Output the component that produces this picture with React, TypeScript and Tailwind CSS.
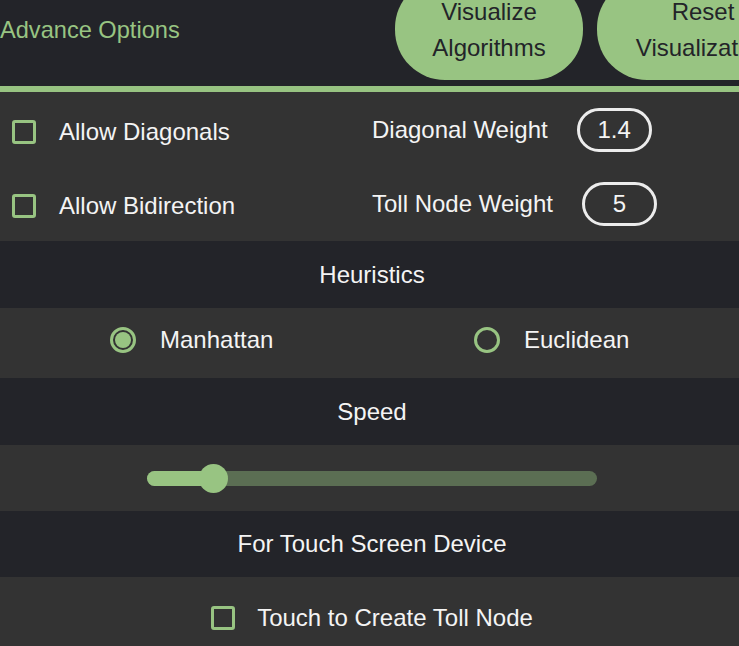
import { useState } from "react";

const font = { fontFamily: '"Liberation Sans", Arial, sans-serif' };

function Checkbox() {
  return <span className="block size-[24px] shrink-0 rounded-[3px] border-[3px] border-[#98c482]" />;
}

function Radio({ checked }: { checked?: boolean }) {
  return (
    <span className="flex size-[26px] shrink-0 items-center justify-center rounded-full border-[3px] border-[#98c482]">
      {checked && <span className="block size-[16px] rounded-full bg-[#98c482]" />}
    </span>
  );
}

function Pill({ value }: { value: string }) {
  return (
    <span className="flex h-[44px] w-[75px] shrink-0 items-center justify-center rounded-full border-[3px] border-[#ececec] text-[#f4f4f4]">
      {value}
    </span>
  );
}

function SectionTitle({ children, h }: { children: string; h: string }) {
  return (
    <div className={`flex items-center justify-center bg-[#232429] text-[#f4f4f4] ${h}`}>{children}</div>
  );
}

/** Advanced options panel of the pathfinding visualizer. */
export default function App() {
  const [heuristic] = useState("manhattan");
  return (
    <div className="h-[646px] w-full overflow-hidden bg-[#333333]" style={font}>
      <div className="w-[744px] text-[24px] leading-[1.15]">
        {/* top bar */}
        <header className="-mt-[22px] border-b-[6px] border-[#98c482] bg-[#232429] pb-[6px]">
          <div className="flex h-[102px] items-center">
            <div className="w-[395px] shrink-0 pt-[4px] text-[23.6px] text-[#98c482]">Advance Options</div>
            <div className="flex shrink-0 gap-[14px]">
              <button className="h-[102px] w-[188px] shrink-0 rounded-[50px] bg-[#98c482] pt-[2px] text-center leading-[36px] text-[#232429]">
                Visualize
                <br />
                Algorithms
              </button>
              <button className="h-[102px] w-[212px] shrink-0 rounded-[50px] bg-[#98c482] pt-[2px] text-center leading-[36px] text-[#232429]">
                Reset
                <br />
                Visualization
              </button>
            </div>
          </div>
        </header>

        {/* toggles + weights */}
        <div className="grid grid-cols-2 text-[#f4f4f4]">
          <div className="flex h-[75px] items-center gap-[23px] pl-[12px] pt-[4px]">
            <Checkbox />
            <span>Allow Diagonals</span>
          </div>
          <div className="flex h-[75px] items-center gap-[29px]">
            <span>Diagonal Weight</span>
            <Pill value="1.4" />
          </div>
          <div className="flex h-[74px] items-center gap-[23px] pl-[12px] pt-[4px]">
            <Checkbox />
            <span>Allow Bidirection</span>
          </div>
          <div className="flex h-[74px] items-center gap-[29px]">
            <span>Toll Node Weight</span>
            <Pill value="5" />
          </div>
        </div>

        <SectionTitle h="h-[67px]">Heuristics</SectionTitle>
        <div className="grid h-[70px] grid-cols-2 pb-[6px] text-[#f4f4f4]">
          <div className="flex items-center gap-[24px] pl-[110px]">
            <Radio checked={heuristic === "manhattan"} />
            <span>Manhattan</span>
          </div>
          <div className="flex items-center gap-[24px] pl-[102px]">
            <Radio checked={heuristic === "euclidean"} />
            <span>Euclidean</span>
          </div>
        </div>

        <SectionTitle h="h-[67px]">Speed</SectionTitle>
        <div className="flex h-[66px] items-center justify-center">
          <div className="relative h-[15px] w-[450px] rounded-full bg-[#5b6e53]">
            <div className="h-full w-[67px] rounded-full bg-[#98c482]" />
            <span className="absolute left-[52px] top-[-7px] size-[29px] rounded-full bg-[#98c482]" />
          </div>
        </div>

        <SectionTitle h="h-[66px]">For Touch Screen Device</SectionTitle>
        <div className="flex h-[82px] items-center justify-center gap-[22px] text-[#f4f4f4]">
          <Checkbox />
          <span>Touch to Create Toll Node</span>
        </div>
      </div>
    </div>
  );
}
